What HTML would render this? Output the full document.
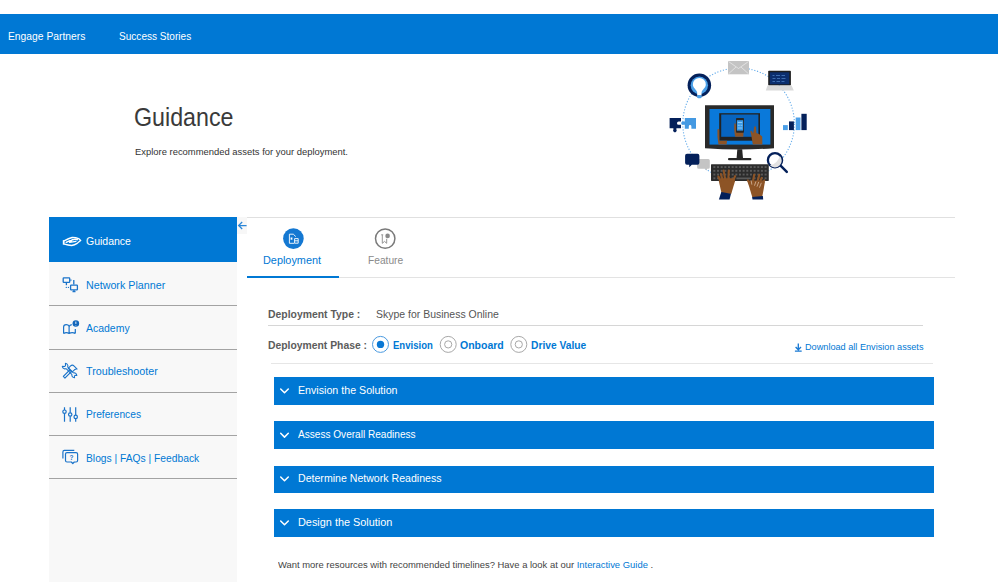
<!DOCTYPE html>
<html><head><meta charset="utf-8">
<style>
*{margin:0;padding:0;box-sizing:border-box}
html,body{width:998px;height:582px;overflow:hidden;background:#fff;font-family:"Liberation Sans",sans-serif}
.a{position:absolute;white-space:nowrap;line-height:1}
#nav{position:absolute;left:0;top:14px;width:998px;height:40px;background:#0078d4}
.nt{color:#fff;font-size:11px}
#side{position:absolute;left:49px;top:217px;width:188px;height:365px;background:#f8f8f8}
.sep{position:absolute;left:49px;width:188px;height:1px;background:#a3a3a3}
.st{color:#0078d4;font-size:11px}
.acc{position:absolute;left:274px;width:660px;height:27.6px;background:#0078d4}
.at{color:#fff;font-size:11px}
</style></head><body>

<div id="nav"></div>
<div class="a nt" style="left:8px;top:30.7px;transform:scaleX(0.937);transform-origin:0 0">Engage Partners</div>
<div class="a nt" style="left:119px;top:30.7px;transform:scaleX(0.915);transform-origin:0 0">Success Stories</div>

<div class="a" style="left:134px;top:104.8px;font-size:25px;color:#3a3a3a;transform:scaleX(0.93);transform-origin:0 0">Guidance</div>
<div class="a" style="left:135px;top:146.6px;font-size:9.5px;color:#333;transform:scaleX(0.991);transform-origin:0 0">Explore recommended assets for your deployment.</div>

<div id="side"></div>
<div style="position:absolute;left:49px;top:217px;width:188px;height:45px;background:#0078d4"></div>
<div class="sep" style="top:305px"></div>
<div class="sep" style="top:349px"></div>
<div class="sep" style="top:392px"></div>
<div class="sep" style="top:435px"></div>
<div class="sep" style="top:478px"></div>

<div class="a st" style="left:86px;top:235.7px;color:#fff;transform:scaleX(0.954);transform-origin:0 0">Guidance</div>
<div class="a st" style="left:85.6px;top:280px;transform:scaleX(0.974);transform-origin:0 0">Network Planner</div>
<div class="a st" style="left:85.6px;top:323.2px;transform:scaleX(0.952);transform-origin:0 0">Academy</div>
<div class="a st" style="left:85.6px;top:366px;transform:scaleX(0.975);transform-origin:0 0">Troubleshooter</div>
<div class="a st" style="left:85.6px;top:409.3px;transform:scaleX(0.927);transform-origin:0 0">Preferences</div>
<div class="a st" style="left:85.6px;top:452.7px;transform:scaleX(0.933);transform-origin:0 0">Blogs | FAQs | Feedback</div>

<!-- collapse arrow box -->
<div style="position:absolute;left:237px;top:217px;width:10px;height:17px;background:#f7f7f7"></div>

<!-- content lines -->
<div style="position:absolute;left:247px;top:217px;width:708px;height:1px;background:#e0e0e0"></div>
<div style="position:absolute;left:247px;top:276.8px;width:708px;height:1.6px;background:#e3e3e3"></div>
<div style="position:absolute;left:247px;top:276px;width:92px;height:2px;background:#0078d4"></div>

<div class="a" style="left:263.4px;top:254.5px;font-size:11px;color:#0078d4;transform:scaleX(0.989);transform-origin:0 0">Deployment</div>
<div class="a" style="left:367.7px;top:254.5px;font-size:11px;color:#8a8a8a;transform:scaleX(0.927);transform-origin:0 0">Feature</div>

<div class="a" style="left:268px;top:309.1px;font-size:11px;font-weight:bold;color:#5c5c5c;transform:scaleX(0.946);transform-origin:0 0">Deployment Type :</div>
<div class="a" style="left:376px;top:309.1px;font-size:11px;color:#555;transform:scaleX(0.952);transform-origin:0 0">Skype for Business Online</div>
<div style="position:absolute;left:268px;top:324.5px;width:655px;height:1.6px;background:#d6d6d6"></div>

<div class="a" style="left:268px;top:339.9px;font-size:11px;font-weight:bold;color:#5c5c5c;transform:scaleX(0.942);transform-origin:0 0">Deployment Phase :</div>
<div class="a" style="left:393px;top:340.9px;font-size:10.4px;font-weight:bold;color:#0078d4;transform:scaleX(0.919);transform-origin:0 0">Envision</div>
<div class="a" style="left:460px;top:339.9px;font-size:11px;font-weight:bold;color:#0078d4;transform:scaleX(0.955);transform-origin:0 0">Onboard</div>
<div class="a" style="left:531.3px;top:339.9px;font-size:11px;font-weight:bold;color:#0078d4;transform:scaleX(0.932);transform-origin:0 0">Drive Value</div>
<div class="a" style="left:805px;top:342.3px;font-size:9.5px;color:#0078d4;transform:scaleX(0.963);transform-origin:0 0">Download all Envision assets</div>
<div style="position:absolute;left:271px;top:362.5px;width:662px;height:1px;background:#e6e6e6"></div>

<div class="acc" style="top:377px"></div>
<div class="acc" style="top:421.3px"></div>
<div class="acc" style="top:465.6px"></div>
<div class="acc" style="top:509px"></div>
<div class="a at" style="left:298px;top:384.7px;transform:scaleX(0.969);transform-origin:0 0">Envision the Solution</div>
<div class="a at" style="left:298px;top:429px;transform:scaleX(0.916);transform-origin:0 0">Assess Overall Readiness</div>
<div class="a at" style="left:298px;top:472.7px;transform:scaleX(0.962);transform-origin:0 0">Determine Network Readiness</div>
<div class="a at" style="left:298px;top:516.7px;transform:scaleX(0.989);transform-origin:0 0">Design the Solution</div>

<div class="a" style="left:278px;top:559.7px;font-size:9.6px;color:#444;transform:scaleX(0.982);transform-origin:0 0">Want more resources with recommended timelines? Have a look at our <span style="color:#0078d4">Interactive Guide</span> .</div>

<svg style="position:absolute;left:0;top:0" width="998" height="582" viewBox="0 0 998 582">
<!-- dotted circle -->
<circle cx="738.6" cy="123.8" r="55.8" fill="none" stroke="#6cb0ec" stroke-width="1.15" stroke-dasharray="1.2 1.7"/>
<!-- envelope -->
<rect x="728" y="61" width="21" height="13.3" fill="#c4c4c4"/>
<path d="M728.5 61.5 L738.5 68.5 L748.5 61.5 M728.5 73.8 L736 67 M748.5 73.8 L741 67" stroke="#e8e8e8" stroke-width="0.8" fill="none"/>
<!-- lightbulb -->
<circle cx="699.35" cy="85.3" r="11.75" fill="#04205a"/>
<circle cx="699.35" cy="85.3" r="8.7" fill="#4a9fe8"/>
<path d="M692.9 84.4 A6.45 6.45 0 1 1 705.8 84.4 C705.8 87.6 702.3 89.6 701.6 92 L701.5 95.4 L697.2 95.4 L697.1 92 C696.4 89.6 692.9 87.6 692.9 84.4 Z" fill="#fff"/>
<rect x="696.9" y="95" width="4.9" height="3.2" rx="1.4" fill="#4a9fe8"/>
<!-- laptop -->
<rect x="768.2" y="70.8" width="22.7" height="14.8" rx="0.8" fill="#1e1e1e"/>
<rect x="769.8" y="72.3" width="19.5" height="12" fill="#0b2e6e"/>
<path d="M772.5 75.5h2 M776 75.5h4 M781.5 75.5h3.5 M772.5 78.5h3 M777 78.5h3 M781.5 78.5h4 M772.5 81.5h2.5 M776.5 81.5h3.5 M781.5 81.5h3" stroke="#4a7cc0" stroke-width="0.8"/>
<path d="M767.5 85.5 L791.6 85.5 L793.8 90.6 L765.8 90.6 Z" fill="#d9d9d9"/>
<!-- puzzle -->
<path d="M669.6 118 H681 V121.6 H678.6 A1.6 1.6 0 0 0 678.6 124.8 H681 V128.3 H676.4 V129.5 A1.8 1.8 0 1 1 673.4 129.5 V128.3 H669.6 Z" fill="#04205a"/>
<path d="M684.8 118 H696 V128.7 H691.4 V126.4 A1.3 1.3 0 0 0 688.8 126.4 V128.7 H684.8 V124.8 H682.8 A1.6 1.6 0 0 1 682.8 121.6 H684.8 Z" fill="#4499e2"/>
<!-- bars -->
<rect x="783" y="125.1" width="4.8" height="5" fill="#4a9fe8"/>
<rect x="789" y="121.4" width="4.9" height="8.7" fill="#04205a"/>
<rect x="795.7" y="117.5" width="4.8" height="12.6" fill="#4a9fe8"/>
<rect x="801.4" y="113.8" width="5.3" height="16.3" fill="#04205a"/>
<!-- monitor -->
<path d="M705 105.2 H774 V148.2 Q739.5 150.6 705 148.2 Z" fill="#2a2a2a"/>
<rect x="709.5" y="109" width="60.9" height="35.6" fill="#0a79da"/>
<rect x="719.2" y="113.2" width="40.8" height="27.5" fill="#222"/>
<rect x="721.2" y="114.5" width="37.2" height="22.3" fill="#0764bf"/>
<!-- phone in hand -->
<path d="M734.3 124 Q734.3 122.8 735.5 123.4 L736.5 128 L743.5 128 L743.4 136.8 L735.2 136.8 Q734 132 734.3 124 Z" fill="#8d5426"/>
<rect x="736" y="118.1" width="8" height="14.7" rx="0.8" fill="#262626"/>
<rect x="736.9" y="120.2" width="6.2" height="10.4" fill="#3a9ae8"/>
<path d="M737.8 122.5h4.4 M737.8 125.3h2 M740.5 125.3h1.8 M737.8 128h4.4" stroke="#8cc8f5" stroke-width="1"/>
<!-- left hand holding tablet -->
<path d="M717.4 129.6 Q718.2 128.6 719.2 129.5 L719.4 140.7 L727 140.7 L726.6 144.6 L718.5 144.6 Q717 137 717.4 129.6 Z" fill="#8d5426"/>
<!-- right hand pointing -->
<path d="M754.3 126.5 Q755.4 125.8 756 127 L756.4 133 Q759.5 133.5 762.2 136.5 L762.4 144.6 L752.8 144.6 L751.2 134.8 L750.3 131.4 Q750.9 130.2 751.9 131.3 L753.2 133.6 Z" fill="#8d5426"/>
<!-- stand -->
<path d="M737.3 149.2 L742.2 149.2 L743 158.3 L736.6 158.3 Z" fill="#262626"/>
<rect x="728" y="157.9" width="23.4" height="2.4" rx="1" fill="#262626"/>
<!-- chat bubbles -->
<path d="M698.6 158.9 H708.3 Q709.8 158.9 709.8 160.4 V167.3 Q709.8 168.8 708.3 168.8 H707.2 L706.6 170.4 L704.8 168.8 H698.6 Q697.1 168.8 697.1 167.3 V160.4 Q697.1 158.9 698.6 158.9 Z" fill="#c4c4c4"/>
<path d="M687 153.8 H697.5 Q699.4 153.8 699.4 155.7 V162.8 Q699.4 164.7 697.5 164.7 H691.8 L689.3 167.2 L689.2 164.7 H687 Q685.1 164.7 685.1 162.8 V155.7 Q685.1 153.8 687 153.8 Z" fill="#04205a"/>
<!-- magnifier -->
<line x1="780.3" y1="165.3" x2="786.8" y2="171.8" stroke="#04205a" stroke-width="2.5" stroke-linecap="round"/>
<circle cx="775" cy="160.2" r="7.1" fill="#fff" stroke="#04205a" stroke-width="2.3"/>
<path d="M779.9 155.9 A6 6 0 0 1 769.9 165.3 Q777.6 163.6 779.9 155.9 Z" fill="#e2e2e2"/>
<!-- keyboard -->
<rect x="711" y="164.2" width="57.8" height="16.7" rx="0.6" fill="#2c2c2c"/>
<g fill="#5a5a5a"><rect x="713.35" y="166.15" width="2" height="1.9"/><rect x="717.01" y="166.15" width="2" height="1.9"/><rect x="720.67" y="166.15" width="2" height="1.9"/><rect x="724.33" y="166.15" width="2" height="1.9"/><rect x="727.99" y="166.15" width="2" height="1.9"/><rect x="731.65" y="166.15" width="2" height="1.9"/><rect x="735.31" y="166.15" width="2" height="1.9"/><rect x="738.97" y="166.15" width="2" height="1.9"/><rect x="742.63" y="166.15" width="2" height="1.9"/><rect x="746.29" y="166.15" width="2" height="1.9"/><rect x="749.95" y="166.15" width="2" height="1.9"/><rect x="753.61" y="166.15" width="2" height="1.9"/><rect x="757.27" y="166.15" width="2" height="1.9"/><rect x="760.93" y="166.15" width="2" height="1.9"/><rect x="764.59" y="166.15" width="2" height="1.9"/><rect x="713.35" y="169.87" width="2" height="1.9"/><rect x="717.01" y="169.87" width="2" height="1.9"/><rect x="720.67" y="169.87" width="2" height="1.9"/><rect x="724.33" y="169.87" width="2" height="1.9"/><rect x="727.99" y="169.87" width="2" height="1.9"/><rect x="731.65" y="169.87" width="2" height="1.9"/><rect x="735.31" y="169.87" width="2" height="1.9"/><rect x="738.97" y="169.87" width="2" height="1.9"/><rect x="742.63" y="169.87" width="2" height="1.9"/><rect x="746.29" y="169.87" width="2" height="1.9"/><rect x="749.95" y="169.87" width="2" height="1.9"/><rect x="753.61" y="169.87" width="2" height="1.9"/><rect x="757.27" y="169.87" width="2" height="1.9"/><rect x="760.93" y="169.87" width="2" height="1.9"/><rect x="764.59" y="169.87" width="2" height="1.9"/><rect x="713.35" y="173.59" width="2" height="1.9"/><rect x="717.01" y="173.59" width="2" height="1.9"/><rect x="720.67" y="173.59" width="2" height="1.9"/><rect x="724.33" y="173.59" width="2" height="1.9"/><rect x="727.99" y="173.59" width="2" height="1.9"/><rect x="731.65" y="173.59" width="2" height="1.9"/><rect x="735.31" y="173.59" width="2" height="1.9"/><rect x="738.97" y="173.59" width="2" height="1.9"/><rect x="742.63" y="173.59" width="2" height="1.9"/><rect x="746.29" y="173.59" width="2" height="1.9"/><rect x="749.95" y="173.59" width="2" height="1.9"/><rect x="753.61" y="173.59" width="2" height="1.9"/><rect x="757.27" y="173.59" width="2" height="1.9"/><rect x="760.93" y="173.59" width="2" height="1.9"/><rect x="764.59" y="173.59" width="2" height="1.9"/><rect x="713.35" y="177.31" width="2" height="1.9"/><rect x="717.01" y="177.31" width="2" height="1.9"/><rect x="720.67" y="177.31" width="2" height="1.9"/><rect x="724.33" y="177.31" width="2" height="1.9"/><rect x="727.99" y="177.31" width="2" height="1.9"/><rect x="731.65" y="177.31" width="2" height="1.9"/><rect x="753.61" y="177.31" width="2" height="1.9"/><rect x="757.27" y="177.31" width="2" height="1.9"/><rect x="760.93" y="177.31" width="2" height="1.9"/><rect x="764.59" y="177.31" width="2" height="1.9"/><rect x="736.4" y="177.5" width="14.3" height="1.7"/></g>
<!-- left hand -->
<path d="M721.6 193.5 L718.8 181 L720.6 178.3 L734.6 178.3 L735 181.2 L731.2 194 Z" fill="#8d5426"/>
<g stroke="#8d5426" stroke-width="2.1" stroke-linecap="round">
<path d="M720.3 181 L718.4 176.5 M722.6 180 L720.9 174.1 M725.2 179.5 L723.6 170.6 M728.3 179.5 L728.8 170.6 M733 181 L735.1 176.1"/>
</g>
<path d="M721.3 192.1 L731 193.7 L729.6 199.6 L718.9 199.6 Z" fill="#04205a"/>
<!-- right hand -->
<path d="M752.3 197.2 L747.9 182.5 L749.5 180.5 L763.5 180.5 L764.9 182.2 L762.2 197 Z" fill="#8d5426"/>
<g stroke="#8d5426" stroke-width="2.1" stroke-linecap="round">
<path d="M750 184.5 L747.9 180.4 M753 181 L754.2 174.7 M757.6 181 L759.3 174.7 M760 182 L761.7 177.9 M762.6 183 L764.3 180.4"/>
</g>
<g stroke="#e9d2be" stroke-width="0.8" stroke-linecap="round" opacity="0.8">
<path d="M751.2 180.8 L751.8 184.3 M755.8 181.8 L754.6 185.3 M758.6 182.3 L757.1 186.3 M761.2 183.2 L759.6 187.3"/>
</g>
<path d="M752.1 197 L762.9 196 L763.2 199.6 L752.5 199.6 Z" fill="#04205a"/>
</svg>

<svg style="position:absolute;left:0;top:0" width="998" height="582" viewBox="0 0 998 582">
<!-- sidebar: guidance hand (white) -->
<g fill="none" stroke="#fff" stroke-width="1.35" stroke-linejoin="round" stroke-linecap="round">
<rect x="62.8" y="240.1" width="1.8" height="4.6" fill="#fff" stroke="none"/>
<path d="M64.6 240.6 Q68.5 238.4 72.1 237.5 Q75.6 237.4 78.6 238.6 L80.7 240.5 Q78.5 242 77.2 243.4 Q74.5 245 71.7 245.5 Q68 245.3 64.6 244.2"/>
<path d="M66.2 242.4 Q69.5 240.2 74.5 239.3 Q76.4 239.2 77.4 239.7 M72.5 239.4 L69.6 242.3 L75.9 241.3"/>
</g>
<!-- network planner -->
<g fill="none" stroke="#1a73c9" stroke-width="1.3" stroke-linejoin="round">
<rect x="63.2" y="277.9" width="6.5" height="4.5" rx="0.6"/>
<path d="M66.4 282.6 V285.2"/>
<rect x="70.6" y="285.2" width="6.8" height="4.6" rx="0.6"/>
<path d="M74 290 V291.4 M72.5 291.6 H75.5 M70.3 280.2 H71.5 M73.8 280 V284.6"/>
</g>
<g fill="#1a73c9"><circle cx="66.3" cy="287.4" r="0.65"/><circle cx="68.4" cy="287.4" r="0.65"/></g>
<!-- academy -->
<g fill="none" stroke="#1a73c9" stroke-width="1.2" stroke-linejoin="round">
<path d="M63.6 333.4 V327 Q63.6 324.6 66.2 324.6 Q68.4 324.6 69.1 326.4 Q69.8 324.9 71.8 324.6"/>
<path d="M69.1 326.4 V333.2 M75.3 329 V333.4 M63.6 333.4 Q66.3 331.7 69.1 333.4 Q72.2 331.7 75.3 333.4"/>
</g>
<circle cx="75.85" cy="323.5" r="3.3" fill="#1467bb"/>
<path d="M75.85 321.6 V323.9 M75.85 325 V325.5" stroke="#fff" stroke-width="0.9"/>
<!-- troubleshooter -->
<g fill="none" stroke="#1a73c9" stroke-width="1.05" stroke-linejoin="round">
<g transform="translate(70.2 371.2) rotate(-45)">
<path d="M-8.6 -1.15 H0.6 V1.15 H-8.6 Z"/>
<path d="M0.6 -3.4 H4 Q6.4 -3.4 6.4 -0.8 V3.4 Q5.4 2.2 4 2 H0.6 Z"/>
</g>
<g transform="translate(70.2 371.2) rotate(45)">
<path d="M-4.6 -1.1 H3.6 M-4.6 1.1 H3.6"/>
<path d="M-4.6 -1.1 L-5.8 -2.5 Q-7.6 -3.3 -9 -2.2 L-7.3 -0.7 L-7.3 0.7 L-9 2.2 Q-7.6 3.3 -5.8 2.5 L-4.6 1.1"/>
<path d="M3.6 -1.1 L4.6 -2.2 Q6.6 -2.8 7.8 -1.6 L6.4 -0.5 L6.4 0.5 L7.8 1.6 Q6.6 2.8 4.6 2.2 L3.6 1.1"/>
</g>
</g>
<!-- preferences -->
<g fill="none" stroke="#1a73c9" stroke-width="1.2">
<path d="M64.5 407.3 V410 M64.5 413.4 V421.7 M70.2 407.3 V412.8 M70.2 416.2 V421.7 M75.7 407.3 V415.2 M75.7 418.6 V421.7"/>
<circle cx="64.5" cy="411.7" r="1.7"/><circle cx="70.2" cy="414.5" r="1.7"/><circle cx="75.7" cy="416.9" r="1.7"/>
</g>
<!-- blogs -->
<g fill="none" stroke="#1a73c9" stroke-width="1.2" stroke-linejoin="round">
<path d="M74.3 450.4 H64.4 Q62.9 450.4 62.9 451.9 V458.5"/>
<path d="M67 452.6 H76.1 Q77.6 452.6 77.6 454.1 V460.5 Q77.6 462 76.1 462 H74.3 L72.8 463.5 L71.3 462 H67 Q65.5 462 65.5 460.5 V454.1 Q65.5 452.6 67 452.6 Z"/>
</g>
<text x="71.5" y="460.3" font-family="Liberation Sans" font-size="6.5" font-weight="bold" fill="#1a73c9" text-anchor="middle">?</text>
<!-- collapse arrow -->
<path d="M246.6 225.5 H239 M242.2 222 L238.6 225.5 L242.2 229" fill="none" stroke="#2a86d8" stroke-width="1.25"/>
<!-- tab deployment icon -->
<circle cx="293.4" cy="238.6" r="10.3" fill="#1478d2"/>
<g fill="none" stroke="#fff" stroke-width="0.9" stroke-linejoin="round">
<path d="M293.3 234.2 H289.4 V243.3 H294.3"/>
<path d="M293.3 234.2 L295.8 236.6"/>
<rect x="294.6" y="238.6" width="3.6" height="4.6"/>
<path d="M294.6 240.8 H298.2"/>
</g>
<rect x="290.6" y="237.5" width="1.8" height="2.2" fill="#fff"/>
<!-- tab feature icon -->
<circle cx="385.2" cy="238.6" r="9.7" fill="none" stroke="#7a7a7a" stroke-width="1.5"/>
<g fill="none" stroke="#8a8a8a" stroke-width="0.9" stroke-linejoin="round">
<path d="M381.2 234.8 H383.2 M382.3 235 V243.3 L384.5 241.4 L386.7 243.3 V238.8"/>
</g>
<circle cx="387.6" cy="235.9" r="2.3" fill="#8a8a8a"/>
<!-- radios -->
<circle cx="380.5" cy="344.4" r="8" fill="none" stroke="#4a9ae0" stroke-width="1"/>
<circle cx="380.5" cy="344.4" r="3.7" fill="#0a78d4"/>
<circle cx="448.2" cy="344.4" r="8" fill="none" stroke="#a8a8a8" stroke-width="1"/>
<circle cx="448.2" cy="344.4" r="3.6" fill="none" stroke="#a8a8a8" stroke-width="1"/>
<circle cx="518.8" cy="344.4" r="8" fill="none" stroke="#a8a8a8" stroke-width="1"/>
<circle cx="518.8" cy="344.4" r="3.6" fill="none" stroke="#a8a8a8" stroke-width="1"/>
<!-- download icon -->
<path d="M798.3 343.4 V349.8 M795.6 347.1 L798.3 349.8 L801 347.1 M794.9 351.1 H801.7" fill="none" stroke="#1a7ad4" stroke-width="1.35"/>
<!-- chevrons -->
<g fill="none" stroke="#fff" stroke-width="1.5" stroke-linecap="round" stroke-linejoin="round">
<path d="M280.7 389 L284.5 392.8 L288.3 389"/>
<path d="M280.7 433.3 L284.5 437.1 L288.3 433.3"/>
<path d="M280.7 477 L284.5 480.8 L288.3 477"/>
<path d="M280.7 521 L284.5 524.8 L288.3 521"/>
</g>
</svg>

</body></html>
